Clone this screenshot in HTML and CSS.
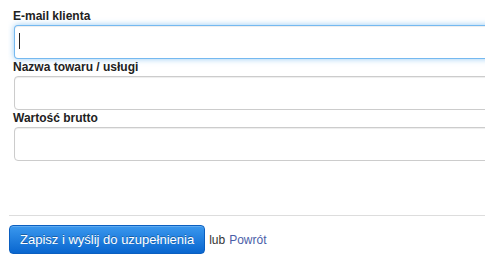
FILE: index.html
```html
<!DOCTYPE html>
<html lang="pl">
<head>
    <meta charset="UTF-8">
    <meta name="viewport" content="width=device-width, initial-scale=1.0">
    <title>Zamówienie do uzupełnienia</title>
    <link rel="stylesheet" href="styles.css">
</head>
<body>
<form class="order-form">
    <div class="fields">
        <label for="email">E-mail klienta</label>
        <div class="input-wrap focused">
            <input type="text" id="email" class="field">
        </div>

        <label for="product">Nazwa towaru / usługi</label>
        <div class="input-wrap">
            <input type="text" id="product" class="field">
        </div>

        <label for="gross">Wartość brutto</label>
        <div class="input-wrap">
            <input type="text" id="gross" class="field">
        </div>
    </div>

    <!-- Actions -->
    <div class="form-actions">
        <button type="button" class="btn-primary">Zapisz i wyślij do uzupełnienia</button>
        <span class="or">lub</span>
        <a href="#" class="back-link">Powrót</a>
    </div>
</form>
</body>
</html>
```

FILE: styles.css
```css
html {
    overflow: hidden;
}

body {
    margin: 8px;
    font-family: "Liberation Sans", Arial, sans-serif;
    font-size: 12px;
    color: #333;
}

.order-form {
    overflow: hidden;
    margin-right: -8px;
}

.fields {
    display: flex;
    flex-direction: column;
    align-items: flex-start;
    padding-left: 5px;
}

.fields label {
    font-weight: bold;
    font-size: 12px;
    line-height: 17px;
    height: 17px;
    color: #222;
}

/* input runs off the right edge of the window */
.input-wrap {
    position: relative;
    width: calc(100% + 20px);
    margin-left: 1px;
}

.field {
    display: block;
    box-sizing: border-box;
    width: 100%;
    height: 34px;
    margin: 0;
    padding: 4px 6px;
    border: 1px solid #ccc;
    border-radius: 4px;
    background: #fff;
    font-family: "Liberation Sans", Arial, sans-serif;
    font-size: 13px;
    color: #333;
    box-shadow: inset 0 1px 1px rgba(0, 0, 0, 0.075);
    outline: none;
}

.input-wrap.focused .field {
    border-color: rgba(82, 168, 236, 0.8);
    box-shadow: inset 0 1px 1px rgba(0, 0, 0, 0.075), 0 0 6px rgba(82, 168, 236, 0.6);
}

/* text caret of the focused field */
.input-wrap.focused::after {
    content: "";
    position: absolute;
    left: 5px;
    top: 8px;
    width: 1px;
    height: 16px;
    background: #222;
}

.form-actions {
    display: flex;
    align-items: center;
    gap: 4px;
    margin: 54px 0 0 1px;
    padding-top: 9px;
    border-top: 1px solid #ddd;
}

.btn-primary {
    height: 29px;
    padding: 0 10px;
    border: 1px solid #0b5fc0;
    border-radius: 4px;
    background: linear-gradient(#3a98ee, #0966cf);
    color: #fff;
    font-family: "Liberation Sans", Arial, sans-serif;
    font-size: 13px;
    text-shadow: 0 -1px 0 rgba(0, 0, 0, 0.3);
    box-shadow: inset 0 1px 0 rgba(255, 255, 255, 0.2);
    cursor: pointer;
}

.or {
    color: #333;
}

.back-link {
    color: #4a5ea8;
    text-decoration: none;
}
```
